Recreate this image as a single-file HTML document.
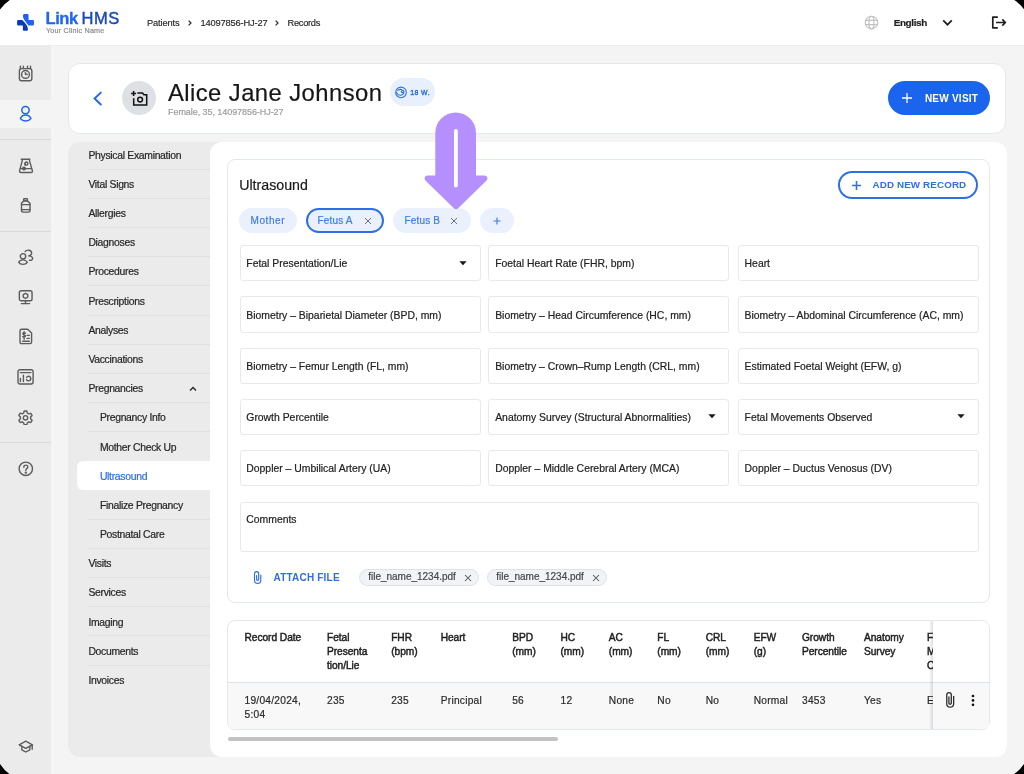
<!DOCTYPE html>
<html><head><meta charset="utf-8">
<style>
*{box-sizing:border-box;margin:0;padding:0}
html,body{width:1024px;height:774px;overflow:hidden;background:#000}
body{font-family:"Liberation Sans",sans-serif;color:#1f1f1f;position:relative}
#app{will-change:transform;position:absolute;left:0;top:0;width:1024px;height:774px;background:#f4f4f4;overflow:hidden}
.abs{position:absolute}
.t{position:absolute;white-space:nowrap;line-height:1;-webkit-text-stroke:0.2px currentColor}
.sep{position:absolute;left:0;width:51px;height:1px;background:#d9d9d9}
.ico{position:absolute;fill:none;stroke:#5c5c5c;stroke-width:1.4;stroke-linecap:round;stroke-linejoin:round}
.fld{position:absolute;background:#fff;border:1px solid #e6e9ed;border-radius:3px}
.nsep{position:absolute;left:88px;width:122px;height:1px;background:#e0e0e0}
</style></head><body>
<div id="app">
<div class="abs" style="left:0;top:0;width:1024px;height:45px;background:#fff"></div>
<div class="abs" style="left:0;top:45px;width:1024px;height:1px;background:#ececec"></div>
<svg class="abs" style="left:14px;top:11px" width="24" height="24" viewBox="0 0 774 774">
<path d="M335 100 H430 Q470 100 470 140 V290 H605 Q645 290 645 330 V425 Q645 465 605 465 H458 C425 395 300 275 290 175 V145 Q290 100 335 100 Z" fill="#1f63f0"/>
<path d="M140 290 H268 C330 365 440 455 450 580 V600 Q450 640 410 640 H325 Q285 640 285 600 V465 H140 Q100 465 100 425 V330 Q100 290 140 290 Z" fill="#0a3bb5"/>
</svg>
<div class="t" style="left:45.50px;top:10.33px;font-size:16.5px;color:#1f66f2;font-weight:bold;-webkit-text-stroke:0;letter-spacing:-0.4px;-webkit-text-stroke:0.3px #1f66f2">Link</div>
<div class="t" style="left:81.50px;top:10.33px;font-size:16.5px;color:#1848b8;letter-spacing:0.5px;-webkit-text-stroke:0.4px #1848b8">HMS</div>
<div class="t" style="left:46.00px;top:26.81px;font-size:7.2px;color:#8c8c8c;letter-spacing:0.2px">Your Clinic Name</div>
<div class="t" style="left:146.90px;top:18.63px;font-size:9.3px;color:#262626;letter-spacing:-0.13px;-webkit-text-stroke:0.15px #262626">Patients</div>
<svg class="abs" style="left:187px;top:20px" width="6" height="6" viewBox="0 0 6 6" fill="none" stroke="#2a2a2a" stroke-width="1.2"><path d="M1.6 0.6l2.4 2.4-2.4 2.4"/></svg>
<div class="t" style="left:200.40px;top:18.63px;font-size:9.3px;color:#262626;letter-spacing:-0.15px;-webkit-text-stroke:0.15px #262626">14097856-HJ-27</div>
<svg class="abs" style="left:274px;top:20px" width="6" height="6" viewBox="0 0 6 6" fill="none" stroke="#2a2a2a" stroke-width="1.2"><path d="M1.6 0.6l2.4 2.4-2.4 2.4"/></svg>
<div class="t" style="left:287.50px;top:18.63px;font-size:9.3px;color:#262626;letter-spacing:-0.3px;-webkit-text-stroke:0.15px #262626">Records</div>
<svg class="abs" style="left:864.1px;top:15.3px" width="15" height="15" viewBox="0 0 15 15" fill="none" stroke="#c2c2c2" stroke-width="1.15">
<circle cx="7.5" cy="7.5" r="6.3"/><ellipse cx="7.5" cy="7.5" rx="2.5" ry="6.3"/><path d="M1.2 5.4h12.6M1.2 9.6h12.6"/></svg>
<div class="t" style="left:893.70px;top:18.02px;font-size:9.9px;color:#1f1f1f;font-weight:bold;-webkit-text-stroke:0;letter-spacing:-0.35px;-webkit-text-stroke:0.2px #1f1f1f">English</div>
<svg class="abs" style="left:942px;top:18.5px" width="11" height="8" viewBox="0 0 11 8" fill="none" stroke="#1f1f1f" stroke-width="1.7"><path d="M1.2 1.4l4.3 4.3 4.3-4.3"/></svg>
<svg class="abs" style="left:990.5px;top:16px" width="16" height="13" viewBox="0 0 16 13" fill="none" stroke="#1f1f1f" stroke-width="1.7" stroke-linejoin="round">
<path d="M6.8 1.2H1.8v10.6h5"/><path d="M5 6.5h9M11.3 3.4l3.1 3.1-3.1 3.1"/></svg>
<div class="abs" style="left:0;top:45px;width:51px;height:729px;background:#ebebeb"></div>
<div class="abs" style="left:0;top:99.7px;width:51px;height:28.3px;background:#f4f4f4"></div>
<div class="sep" style="top:138.7px"></div>
<div class="sep" style="top:230.8px"></div>
<div class="sep" style="top:442px"></div>
<svg class="ico" style="left:17px;top:65px" width="17" height="18" viewBox="0 0 17 18">
<rect x="2.4" y="3.65" width="12.45" height="12.1" rx="2.2"/><path d="M3.4 1.2v2.4M6.4 1.2v2.4M10.5 1.2v2.4M13.5 1.2v2.4"/><circle cx="8.5" cy="9.4" r="3.9"/><path d="M8 7.4V9.7H10.6Z" fill="#5c5c5c" stroke-width="0.6"/></svg>
<svg class="ico" style="left:18px;top:103px;stroke:#1f66f2;stroke-width:1.5" width="15" height="20" viewBox="0 0 15 20">
<circle cx="7.5" cy="7.1" r="3.7"/><path d="M2.4 15.6C3.5 13 5.5 12.1 7.65 12.1 9.8 12.1 11.8 13 12.9 15.6 11.8 17 9.8 17.9 7.65 17.9 5.5 17.9 3.5 17 2.4 15.6Z"/></svg>
<svg class="ico" style="left:18px;top:158px" width="16" height="16" viewBox="0 0 16 16">
<path d="M3.3 1.3H11.8"/><path d="M4.5 1.6L1.6 12.9Q1.3 14.5 2.9 14.5H13.1Q14.7 14.5 14.4 12.9L11.2 1.6"/><path d="M2.4 10.6H13.6"/><circle cx="6" cy="10.5" r="1.3"/><circle cx="8.4" cy="5.6" r="1.5"/><path d="M7.2 7.2C6.6 6.2 7 4.4 8.6 3.9"/></svg>
<svg class="ico" style="left:19px;top:197px" width="13" height="17" viewBox="0 0 13 17">
<rect x="4.7" y="1.7" width="3.7" height="2.2" rx=".5"/><path d="M4.7 3.9L2.5 6.2V13.3Q2.5 15.1 4.3 15.1H9.2Q11 15.1 11 13.3V6.2L8.4 3.9Z"/><path d="M2.5 7.6H11M2.5 12.6H11"/></svg>
<svg class="ico" style="left:17px;top:248px" width="18" height="18" viewBox="0 0 18 18">
<circle cx="6" cy="8.3" r="2.7"/><path d="M1.7 14.4C2.6 12.7 4.2 11.9 6 11.9 7.8 11.9 9.4 12.7 10.4 14.4 9.4 15.8 7.8 16.4 6 16.4 4.2 16.4 2.6 15.8 1.7 14.4Z"/><path d="M8.2 3.5C9.2 2.3 10.6 1.9 12 2.2 13.7 2.6 14.8 3.8 14.6 5.4 14.4 6.7 13 7.7 11.6 7.9 13.6 8 15.6 9.1 15.6 10.6 15.6 11.9 14 12.6 12.5 12.3"/></svg>
<svg class="ico" style="left:18px;top:289px" width="16" height="17" viewBox="0 0 16 17">
<rect x="1.35" y="1.7" width="12.7" height="10" rx="1.8"/><path d="M7.5 11.7V14.6M3.4 14.6H11.6"/><path d="M7.5 4.3L9.75 5.6V8.2L7.5 9.5 5.25 8.2V5.6Z"/></svg>
<svg class="ico" style="left:18.5px;top:328px" width="14" height="17" viewBox="0 0 14 17">
<path d="M2.6 1.2h6l4 3.9v8.9c0 .9-.7 1.6-1.6 1.6H2.6c-.9 0-1.6-.7-1.6-1.6V2.8c0-.9.7-1.6 1.6-1.6z"/><path d="M3.7 13.3h6.6M8.1 7.4h2.2M8.1 10.4h2.2M5.1 3.7v7.6M6.4 5.2c-.4-.6-2.6-.8-2.6.6s2.6.9 2.6 2.3-2.4 1.3-2.7.5"/></svg>
<svg class="ico" style="left:17px;top:368px" width="18" height="18" viewBox="0 0 18 18">
<rect x="1" y="1.7" width="15.1" height="14.3" rx="2"/><path d="M3.3 4.6H13.9M3.4 10.5V13.6M6.4 7.3V13.6M9.6 9.4C10.1 8.5 11 8.1 11.9 8.2 13 8.4 13.8 9.3 13.8 10.6 13.8 11.9 12.8 12.9 11.5 12.9 10.6 12.9 9.9 12.4 9.5 11.6"/></svg>
<svg class="ico" style="left:18px;top:409.6px" width="15" height="15" viewBox="0 0 15 15">
<path d="M6.2 1h2.6l.5 2 1.5.9 2-.6 1.3 2.2-1.5 1.5v1.8l1.5 1.5-1.3 2.2-2-.6-1.5.9-.5 2H6.2l-.5-2-1.5-.9-2 .6-1.3-2.2 1.5-1.5V6.9L.9 5.4l1.3-2.2 2 .6 1.5-.9z"/><circle cx="7.5" cy="7.8" r="2.2"/></svg>
<svg class="ico" style="left:18px;top:461px" width="16" height="16" viewBox="0 0 16 16">
<circle cx="7.8" cy="7.8" r="6.7"/><path d="M5.8 6.2c0-1.2.9-2.1 2-2.1s2 .8 2 1.9c0 1.6-2 1.7-2 3.3"/><circle cx="7.8" cy="11.6" r=".5" fill="#5c5c5c"/></svg>
<svg class="ico" style="left:18px;top:739.5px" width="16" height="14" viewBox="0 0 16 14">
<path d="M7.8 1.2l6.6 3.6-6.6 3.6L1.2 4.8z"/><path d="M3.8 6.2v3.6l4 2.2 4-2.2V6.2M14.2 5v4.2"/></svg>
<div class="abs" style="left:68.4px;top:62.7px;width:938.1px;height:71.2px;background:#fff;border:1px solid #e3e8ee;border-radius:12px"></div>
<svg class="abs" style="left:92px;top:91px" width="11" height="15" viewBox="0 0 11 15" fill="none" stroke="#2368f0" stroke-width="2" stroke-linecap="round"><path d="M8.8 1.6L2.6 7.5l6.2 6"/></svg>
<div class="abs" style="left:122.3px;top:80.9px;width:34px;height:34px;border-radius:50%;background:#dde1e6"></div>
<svg class="abs" style="left:130px;top:89.5px" width="18" height="16" viewBox="0 0 18 16" fill="none" stroke="#111" stroke-width="1.5">
<path d="M3.6 1v5M1.1 3.5h5"/><path d="M3.7 8.2v6.8h13V4.8h-2.8L12.5 3H7.4"/><circle cx="10.1" cy="9.6" r="2.4"/></svg>
<div class="t" style="left:167.90px;top:80.65px;font-size:23.8px;color:#161616;letter-spacing:0.45px">Alice Jane Johnson</div>
<div class="t" style="left:168.00px;top:107.88px;font-size:9px;color:#9e9e9e;letter-spacing:-0.06px">Female, 35, 14097856-HJ-27</div>
<div class="abs" style="left:390px;top:78.2px;width:44.5px;height:28px;border-radius:14px;background:#e9f0fd"></div>
<svg class="abs" style="left:0;top:0;overflow:visible" width="1" height="1" viewBox="0 0 1 1" fill="none" stroke="#2f6fe6" stroke-width="1.1" stroke-linecap="round">
<circle cx="401" cy="92.4" r="5.3"/><path d="M396.4 92.4C397.2 94.6 399.5 95.6 401.5 94.9 403.4 94.2 404.4 92.2 403.7 91 403 89.9 401.3 90.4 401.3 91.6 401.3 92.6 402.5 92.9 403.3 92.3"/><path d="M397.8 90.4C398.9 89.4 400.4 89.2 401.6 89.6"/></svg>
<div class="t" style="left:410.20px;top:89.76px;font-size:6.9px;color:#2f6fe6;letter-spacing:0.45px;-webkit-text-stroke:0.4px #2f6fe6">18 W.</div>
<div class="abs" style="left:887.6px;top:80.9px;width:102.2px;height:34px;border-radius:17px;background:#1b64ed"></div>
<svg class="abs" style="left:902px;top:93px" width="10" height="10" viewBox="0 0 10 10" stroke="#fff" stroke-width="1.3"><path d="M5 0v10M0 5h10"/></svg>
<div class="t" style="left:924.90px;top:94.13px;font-size:10px;color:#ffffff;font-weight:bold;-webkit-text-stroke:0;letter-spacing:0.24px">NEW VISIT</div>
<div class="abs" style="left:68.4px;top:141.7px;width:160px;height:615.3px;background:#ebebeb;border-radius:12px"></div>
<div class="t" style="left:88.40px;top:150.80px;font-size:10.4px;color:#262626;letter-spacing:-0.3px">Physical Examination</div>
<div class="nsep" style="top:168.67px"></div>
<div class="t" style="left:88.40px;top:179.97px;font-size:10.4px;color:#262626;letter-spacing:-0.3px">Vital Signs</div>
<div class="nsep" style="top:197.84px"></div>
<div class="t" style="left:88.40px;top:209.14px;font-size:10.4px;color:#262626;letter-spacing:-0.3px">Allergies</div>
<div class="nsep" style="top:227.01px"></div>
<div class="t" style="left:88.40px;top:238.31px;font-size:10.4px;color:#262626;letter-spacing:-0.3px">Diagnoses</div>
<div class="nsep" style="top:256.18px"></div>
<div class="t" style="left:88.40px;top:267.48px;font-size:10.4px;color:#262626;letter-spacing:-0.3px">Procedures</div>
<div class="nsep" style="top:285.35px"></div>
<div class="t" style="left:88.40px;top:296.65px;font-size:10.4px;color:#262626;letter-spacing:-0.3px">Prescriptions</div>
<div class="nsep" style="top:314.52px"></div>
<div class="t" style="left:88.40px;top:325.82px;font-size:10.4px;color:#262626;letter-spacing:-0.3px">Analyses</div>
<div class="nsep" style="top:343.69px"></div>
<div class="t" style="left:88.40px;top:354.99px;font-size:10.4px;color:#262626;letter-spacing:-0.3px">Vaccinations</div>
<div class="nsep" style="top:372.86px"></div>
<div class="t" style="left:88.40px;top:384.16px;font-size:10.4px;color:#262626;letter-spacing:-0.3px">Pregnancies</div>
<div class="nsep" style="top:402.03px"></div>
<div class="t" style="left:99.90px;top:413.33px;font-size:10.4px;color:#262626;letter-spacing:-0.3px">Pregnancy Info</div>
<div class="nsep" style="top:431.20px"></div>
<div class="t" style="left:99.90px;top:442.50px;font-size:10.4px;color:#262626;letter-spacing:-0.3px">Mother Check Up</div>
<div class="abs" style="left:77px;top:461.37px;width:140px;height:28.57px;background:#fff;border-radius:6px 0 0 6px"></div>
<div class="t" style="left:99.90px;top:471.67px;font-size:10.4px;color:#2b6de8;letter-spacing:-0.3px;-webkit-text-stroke:0.2px #2b6de8">Ultrasound</div>
<div class="t" style="left:99.90px;top:500.84px;font-size:10.4px;color:#262626;letter-spacing:-0.3px">Finalize Pregnancy</div>
<div class="nsep" style="top:518.71px"></div>
<div class="t" style="left:99.90px;top:530.01px;font-size:10.4px;color:#262626;letter-spacing:-0.3px">Postnatal Care</div>
<div class="nsep" style="top:547.88px"></div>
<div class="t" style="left:88.40px;top:559.18px;font-size:10.4px;color:#262626;letter-spacing:-0.3px">Visits</div>
<div class="nsep" style="top:577.05px"></div>
<div class="t" style="left:88.40px;top:588.35px;font-size:10.4px;color:#262626;letter-spacing:-0.3px">Services</div>
<div class="nsep" style="top:606.22px"></div>
<div class="t" style="left:88.40px;top:617.52px;font-size:10.4px;color:#262626;letter-spacing:-0.3px">Imaging</div>
<div class="nsep" style="top:635.39px"></div>
<div class="t" style="left:88.40px;top:646.69px;font-size:10.4px;color:#262626;letter-spacing:-0.3px">Documents</div>
<div class="nsep" style="top:664.56px"></div>
<div class="t" style="left:88.40px;top:675.86px;font-size:10.4px;color:#262626;letter-spacing:-0.3px">Invoices</div>
<svg class="abs" style="left:189px;top:385.5px" width="8" height="6" viewBox="0 0 8 6" fill="none" stroke="#262626" stroke-width="1.4"><path d="M1 4.6l3-3 3 3"/></svg>
<div class="abs" style="left:210px;top:141.8px;width:797px;height:615.2px;background:#fff;border-radius:12px"></div>
<div class="abs" style="left:227.2px;top:159.2px;width:762.6px;height:443.9px;border:1px solid #e3e8ee;border-radius:8px"></div>
<div class="t" style="left:239.20px;top:177.78px;font-size:14.2px;color:#1a1a1a">Ultrasound</div>
<div class="abs" style="left:837.7px;top:170.7px;width:140.8px;height:28.5px;border:2px solid #2f6fe6;border-radius:14.5px"></div>
<svg class="abs" style="left:851.8px;top:180.6px" width="9" height="9" viewBox="0 0 9 9" stroke="#2f6fe6" stroke-width="1.6"><path d="M4.5 0v9M0 4.5h9"/></svg>
<div class="t" style="left:872.50px;top:180.30px;font-size:9.8px;color:#2f6fe6;font-weight:bold;-webkit-text-stroke:0;letter-spacing:0.13px">ADD NEW RECORD</div>
<div class="abs" style="left:239.2px;top:207.9px;width:57.8px;height:25.2px;border-radius:13px;background:#eaf1fd"></div>
<div class="t" style="left:250.60px;top:215.73px;font-size:10px;color:#3e7be6;letter-spacing:0.55px;-webkit-text-stroke:0.2px #3e7be6">Mother</div>
<div class="abs" style="left:305.8px;top:208px;width:78.4px;height:24.9px;border-radius:13px;background:#eaf1fd;border:2px solid #2f6fe6"></div>
<div class="t" style="left:317.60px;top:215.73px;font-size:10px;color:#3e7be6;letter-spacing:0.15px;-webkit-text-stroke:0.2px #3e7be6">Fetus A</div>
<svg class="abs" style="left:364px;top:216.5px" width="8" height="8" viewBox="0 0 8 8" stroke="#707070" stroke-width="1.0"><path d="M1 1l6 6M7 1L1 7"/></svg>
<div class="abs" style="left:393.4px;top:208px;width:77.8px;height:24.9px;border-radius:13px;background:#eaf1fd"></div>
<div class="t" style="left:404.60px;top:215.73px;font-size:10px;color:#3e7be6;letter-spacing:0.15px;-webkit-text-stroke:0.2px #3e7be6">Fetus B</div>
<svg class="abs" style="left:450.2px;top:216.5px" width="8" height="8" viewBox="0 0 8 8" stroke="#707070" stroke-width="1.0"><path d="M1 1l6 6M7 1L1 7"/></svg>
<div class="abs" style="left:480px;top:208px;width:33.7px;height:24.9px;border-radius:13px;background:#eaf1fd"></div>
<svg class="abs" style="left:492.6px;top:216.5px" width="8" height="8" viewBox="0 0 8 8" stroke="#3e7be6" stroke-width="1.15"><path d="M4 0.5v7M0.5 4h7"/></svg>
<div class="fld" style="left:239.5px;top:245px;width:241px;height:36.3px"></div>
<div class="t" style="left:246.30px;top:259.20px;font-size:10.4px;color:#222">Fetal Presentation/Lie</div>
<svg class="abs" style="left:459.0px;top:260.8px" width="8" height="5" viewBox="0 0 8 5"><path d="M0.3 0.3h7.4L4 4.3z" fill="#1a1a1a"/></svg>
<div class="fld" style="left:488.4px;top:245px;width:241px;height:36.3px"></div>
<div class="t" style="left:495.20px;top:259.20px;font-size:10.4px;color:#222">Foetal Heart Rate (FHR, bpm)</div>
<div class="fld" style="left:737.8px;top:245px;width:241px;height:36.3px"></div>
<div class="t" style="left:744.60px;top:259.20px;font-size:10.4px;color:#222">Heart</div>
<div class="fld" style="left:239.5px;top:296.3px;width:241px;height:36.3px"></div>
<div class="t" style="left:246.30px;top:310.50px;font-size:10.4px;color:#222">Biometry &#8211; Biparietal Diameter (BPD, mm)</div>
<div class="fld" style="left:488.4px;top:296.3px;width:241px;height:36.3px"></div>
<div class="t" style="left:495.20px;top:310.50px;font-size:10.4px;color:#222">Biometry &#8211; Head Circumference (HC, mm)</div>
<div class="fld" style="left:737.8px;top:296.3px;width:241px;height:36.3px"></div>
<div class="t" style="left:744.60px;top:310.50px;font-size:10.4px;color:#222">Biometry &#8211; Abdominal Circumference (AC, mm)</div>
<div class="fld" style="left:239.5px;top:347.5px;width:241px;height:36.3px"></div>
<div class="t" style="left:246.30px;top:361.70px;font-size:10.4px;color:#222">Biometry &#8211; Femur Length (FL, mm)</div>
<div class="fld" style="left:488.4px;top:347.5px;width:241px;height:36.3px"></div>
<div class="t" style="left:495.20px;top:361.70px;font-size:10.4px;color:#222">Biometry &#8211; Crown&#8211;Rump Length (CRL, mm)</div>
<div class="fld" style="left:737.8px;top:347.5px;width:241px;height:36.3px"></div>
<div class="t" style="left:744.60px;top:361.70px;font-size:10.4px;color:#222">Estimated Foetal Weight (EFW, g)</div>
<div class="fld" style="left:239.5px;top:398.6px;width:241px;height:36.3px"></div>
<div class="t" style="left:246.30px;top:412.80px;font-size:10.4px;color:#222">Growth Percentile</div>
<div class="fld" style="left:488.4px;top:398.6px;width:241px;height:36.3px"></div>
<div class="t" style="left:495.20px;top:412.80px;font-size:10.4px;color:#222">Anatomy Survey (Structural Abnormalities)</div>
<svg class="abs" style="left:707.9px;top:414.4px" width="8" height="5" viewBox="0 0 8 5"><path d="M0.3 0.3h7.4L4 4.3z" fill="#1a1a1a"/></svg>
<div class="fld" style="left:737.8px;top:398.6px;width:241px;height:36.3px"></div>
<div class="t" style="left:744.60px;top:412.80px;font-size:10.4px;color:#222">Fetal Movements Observed</div>
<svg class="abs" style="left:957.3px;top:414.4px" width="8" height="5" viewBox="0 0 8 5"><path d="M0.3 0.3h7.4L4 4.3z" fill="#1a1a1a"/></svg>
<div class="fld" style="left:239.5px;top:449.9px;width:241px;height:36.3px"></div>
<div class="t" style="left:246.30px;top:464.10px;font-size:10.4px;color:#222">Doppler &#8211; Umbilical Artery (UA)</div>
<div class="fld" style="left:488.4px;top:449.9px;width:241px;height:36.3px"></div>
<div class="t" style="left:495.20px;top:464.10px;font-size:10.4px;color:#222">Doppler &#8211; Middle Cerebral Artery (MCA)</div>
<div class="fld" style="left:737.8px;top:449.9px;width:241px;height:36.3px"></div>
<div class="t" style="left:744.60px;top:464.10px;font-size:10.4px;color:#222">Doppler &#8211; Ductus Venosus (DV)</div>
<div class="fld" style="left:239.5px;top:501.5px;width:739.3px;height:50.2px"></div>
<div class="t" style="left:246.30px;top:515.30px;font-size:10.4px;color:#222">Comments</div>
<svg class="abs" style="left:0;top:0;overflow:visible" width="1" height="1" viewBox="0 0 1 1" fill="none" stroke="#2f6fe6" stroke-width="1.15" stroke-linecap="round">
<path d="M260.8 575 V580.25 A3.15 3.15 0 0 1 254.5 580.25 V573.7 A2.1 2.1 0 0 1 258.7 573.7 V579.3 A1.05 1.05 0 0 1 256.6 579.3 V575.5"/></svg>
<div class="t" style="left:273.50px;top:572.74px;font-size:10px;color:#2f6fe6;font-weight:bold;-webkit-text-stroke:0;letter-spacing:0.2px">ATTACH FILE</div>
<div class="abs" style="left:359.2px;top:568.8px;width:119.6px;height:17.3px;border-radius:9px;background:#f1f3f6;border:1px solid #dde2e8"></div>
<div class="t" style="left:368.30px;top:572.33px;font-size:10px;color:#474747;letter-spacing:-0.02px">file_name_1234.pdf</div>
<svg class="abs" style="left:463.7px;top:573.9px" width="8" height="8" viewBox="0 0 8 8" stroke="#555" stroke-width="1.05"><path d="M1 1l6 6M7 1L1 7"/></svg>
<div class="abs" style="left:487.2px;top:568.8px;width:119.6px;height:17.3px;border-radius:9px;background:#f1f3f6;border:1px solid #dde2e8"></div>
<div class="t" style="left:496.30px;top:572.33px;font-size:10px;color:#474747;letter-spacing:-0.02px">file_name_1234.pdf</div>
<svg class="abs" style="left:591.7px;top:573.9px" width="8" height="8" viewBox="0 0 8 8" stroke="#555" stroke-width="1.05"><path d="M1 1l6 6M7 1L1 7"/></svg>
<div class="abs" style="left:227.2px;top:619.7px;width:762.6px;height:110.8px;border:1px solid #e3e8ee;border-radius:8px;overflow:hidden;background:#fff"><div class="abs" style="left:0;top:61.1px;width:762px;height:50px;background:#f8f8f8;border-top:1px solid #dfe4ea"></div></div>
<div class="t" style="left:244.50px;top:633.37px;font-size:10.2px;color:#1f1f1f;letter-spacing:-0.05px;-webkit-text-stroke:0.45px #1f1f1f">Record Date</div>
<div class="t" style="left:327.00px;top:633.37px;font-size:10.2px;color:#1f1f1f;letter-spacing:-0.05px;-webkit-text-stroke:0.45px #1f1f1f">Fetal</div>
<div class="t" style="left:327.00px;top:647.37px;font-size:10.2px;color:#1f1f1f;letter-spacing:-0.05px;-webkit-text-stroke:0.45px #1f1f1f">Presenta</div>
<div class="t" style="left:327.00px;top:661.37px;font-size:10.2px;color:#1f1f1f;letter-spacing:-0.05px;-webkit-text-stroke:0.45px #1f1f1f">tion/Lie</div>
<div class="t" style="left:391.20px;top:633.37px;font-size:10.2px;color:#1f1f1f;letter-spacing:-0.05px;-webkit-text-stroke:0.45px #1f1f1f">FHR</div>
<div class="t" style="left:391.20px;top:647.37px;font-size:10.2px;color:#1f1f1f;letter-spacing:-0.05px;-webkit-text-stroke:0.45px #1f1f1f">(bpm)</div>
<div class="t" style="left:440.70px;top:633.37px;font-size:10.2px;color:#1f1f1f;letter-spacing:-0.05px;-webkit-text-stroke:0.45px #1f1f1f">Heart</div>
<div class="t" style="left:512.20px;top:633.37px;font-size:10.2px;color:#1f1f1f;letter-spacing:-0.05px;-webkit-text-stroke:0.45px #1f1f1f">BPD</div>
<div class="t" style="left:512.20px;top:647.37px;font-size:10.2px;color:#1f1f1f;letter-spacing:-0.05px;-webkit-text-stroke:0.45px #1f1f1f">(mm)</div>
<div class="t" style="left:560.50px;top:633.37px;font-size:10.2px;color:#1f1f1f;letter-spacing:-0.05px;-webkit-text-stroke:0.45px #1f1f1f">HC</div>
<div class="t" style="left:560.50px;top:647.37px;font-size:10.2px;color:#1f1f1f;letter-spacing:-0.05px;-webkit-text-stroke:0.45px #1f1f1f">(mm)</div>
<div class="t" style="left:608.80px;top:633.37px;font-size:10.2px;color:#1f1f1f;letter-spacing:-0.05px;-webkit-text-stroke:0.45px #1f1f1f">AC</div>
<div class="t" style="left:608.80px;top:647.37px;font-size:10.2px;color:#1f1f1f;letter-spacing:-0.05px;-webkit-text-stroke:0.45px #1f1f1f">(mm)</div>
<div class="t" style="left:657.30px;top:633.37px;font-size:10.2px;color:#1f1f1f;letter-spacing:-0.05px;-webkit-text-stroke:0.45px #1f1f1f">FL</div>
<div class="t" style="left:657.30px;top:647.37px;font-size:10.2px;color:#1f1f1f;letter-spacing:-0.05px;-webkit-text-stroke:0.45px #1f1f1f">(mm)</div>
<div class="t" style="left:705.70px;top:633.37px;font-size:10.2px;color:#1f1f1f;letter-spacing:-0.05px;-webkit-text-stroke:0.45px #1f1f1f">CRL</div>
<div class="t" style="left:705.70px;top:647.37px;font-size:10.2px;color:#1f1f1f;letter-spacing:-0.05px;-webkit-text-stroke:0.45px #1f1f1f">(mm)</div>
<div class="t" style="left:753.70px;top:633.37px;font-size:10.2px;color:#1f1f1f;letter-spacing:-0.05px;-webkit-text-stroke:0.45px #1f1f1f">EFW</div>
<div class="t" style="left:753.70px;top:647.37px;font-size:10.2px;color:#1f1f1f;letter-spacing:-0.05px;-webkit-text-stroke:0.45px #1f1f1f">(g)</div>
<div class="t" style="left:802.00px;top:633.37px;font-size:10.2px;color:#1f1f1f;letter-spacing:-0.05px;-webkit-text-stroke:0.45px #1f1f1f">Growth</div>
<div class="t" style="left:802.00px;top:647.37px;font-size:10.2px;color:#1f1f1f;letter-spacing:-0.05px;-webkit-text-stroke:0.45px #1f1f1f">Percentile</div>
<div class="t" style="left:864.00px;top:633.37px;font-size:10.2px;color:#1f1f1f;letter-spacing:-0.05px;-webkit-text-stroke:0.45px #1f1f1f">Anatomy</div>
<div class="t" style="left:864.00px;top:647.37px;font-size:10.2px;color:#1f1f1f;letter-spacing:-0.05px;-webkit-text-stroke:0.45px #1f1f1f">Survey</div>
<div class="t" style="left:927.00px;top:633.37px;font-size:10.2px;color:#1f1f1f;letter-spacing:-0.05px;-webkit-text-stroke:0.45px #1f1f1f">F</div>
<div class="t" style="left:927.00px;top:647.37px;font-size:10.2px;color:#1f1f1f;letter-spacing:-0.05px;-webkit-text-stroke:0.45px #1f1f1f">M</div>
<div class="t" style="left:927.00px;top:661.37px;font-size:10.2px;color:#1f1f1f;letter-spacing:-0.05px;-webkit-text-stroke:0.45px #1f1f1f">O</div>
<div class="t" style="left:244.50px;top:695.97px;font-size:10.2px;color:#2a2a2a;letter-spacing:0.25px">19/04/2024,</div>
<div class="t" style="left:244.50px;top:709.97px;font-size:10.2px;color:#2a2a2a;letter-spacing:0.25px">5:04</div>
<div class="t" style="left:327.00px;top:695.97px;font-size:10.2px;color:#2a2a2a;letter-spacing:0.25px">235</div>
<div class="t" style="left:391.20px;top:695.97px;font-size:10.2px;color:#2a2a2a;letter-spacing:0.25px">235</div>
<div class="t" style="left:440.70px;top:695.97px;font-size:10.2px;color:#2a2a2a;letter-spacing:0.25px">Principal</div>
<div class="t" style="left:512.20px;top:695.97px;font-size:10.2px;color:#2a2a2a;letter-spacing:0.25px">56</div>
<div class="t" style="left:560.50px;top:695.97px;font-size:10.2px;color:#2a2a2a;letter-spacing:0.25px">12</div>
<div class="t" style="left:608.80px;top:695.97px;font-size:10.2px;color:#2a2a2a;letter-spacing:0.25px">None</div>
<div class="t" style="left:657.30px;top:695.97px;font-size:10.2px;color:#2a2a2a;letter-spacing:0.25px">No</div>
<div class="t" style="left:705.70px;top:695.97px;font-size:10.2px;color:#2a2a2a;letter-spacing:0.25px">No</div>
<div class="t" style="left:753.70px;top:695.97px;font-size:10.2px;color:#2a2a2a;letter-spacing:0.25px">Normal</div>
<div class="t" style="left:802.00px;top:695.97px;font-size:10.2px;color:#2a2a2a;letter-spacing:0.25px">3453</div>
<div class="t" style="left:864.00px;top:695.97px;font-size:10.2px;color:#2a2a2a;letter-spacing:0.25px">Yes</div>
<div class="t" style="left:927.00px;top:695.97px;font-size:10.2px;color:#2a2a2a;letter-spacing:0.25px">E</div>
<div class="abs" style="left:932.6px;top:620.7px;width:56.4px;height:108.8px;background:#fff;border-radius:0 7px 7px 0"></div>
<div class="abs" style="left:932.6px;top:681.8px;width:56.4px;height:47.7px;background:#f8f8f8;border-top:1px solid #dfe4ea;border-radius:0 0 7px 0"></div>
<div class="abs" style="left:929px;top:620.7px;width:3.6px;height:108.8px;background:linear-gradient(to right,rgba(0,0,0,0),rgba(0,0,0,0.13))"></div>
<svg class="abs" style="left:0;top:0;overflow:visible" width="1" height="1" viewBox="0 0 1 1" fill="none" stroke="#2b2b2b" stroke-width="1.3" stroke-linecap="round">
<path d="M953.65 696.5 V703.7 A3.45 3.45 0 0 1 946.75 703.7 V694.9 A2.275 2.275 0 0 1 951.3 694.9 V703 A1.2 1.2 0 0 1 948.9 703 V697"/></svg>
<svg class="abs" style="left:970.7px;top:693.6px" width="4" height="13" viewBox="0 0 4 13" fill="#111"><circle cx="2" cy="2" r="1.35"/><circle cx="2" cy="6.4" r="1.35"/><circle cx="2" cy="10.8" r="1.35"/></svg>
<div class="abs" style="left:227.6px;top:737.2px;width:330.4px;height:3.8px;border-radius:2px;background:#c2c2c2"></div>
<svg class="abs" style="left:420px;top:108px" width="72" height="106" viewBox="420 108 72 106">
<path d="M435.3 132.8 A20.35 20.35 0 0 1 476 132.8 V175.5 H484.5 A3 3 0 0 1 486.6 180.6 L458.1 208.3 A3 3 0 0 1 453.9 208.3 L425.4 180.6 A3 3 0 0 1 427.5 175.5 H435.3 Z" fill="#b48ffd"/>
<rect x="454" y="129" width="3.8" height="58.5" rx="1.9" fill="#fff"/>
</svg>
<svg class="abs" style="left:0;top:0" width="1024" height="774" viewBox="0 0 1024 774">
<path d="M0 0H9.8Q3.9 3.9 0 9.6Z M1024 0H1014.2Q1020.1 3.9 1024 9.2Z M0 774V764Q3.9 770 9.4 774Z M1024 774V764Q1020.1 770 1014.1 774Z" fill="#000"/></svg>
</div></body></html>
